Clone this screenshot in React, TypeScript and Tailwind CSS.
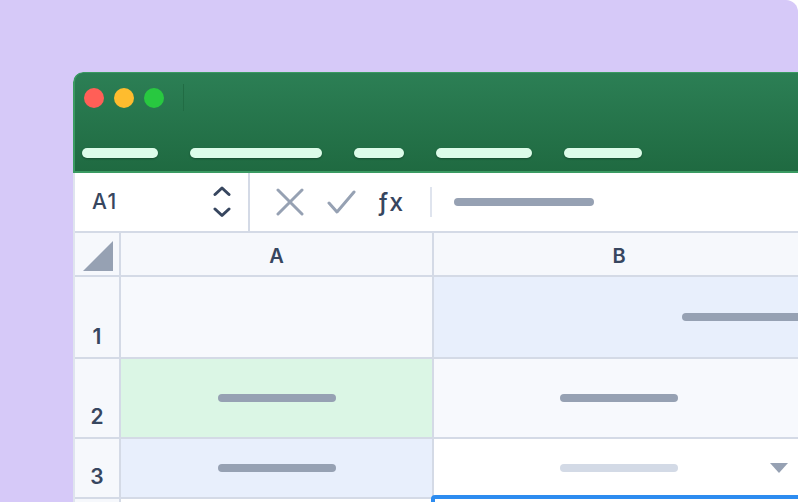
import React from 'react';

const menuWidths = [76, 132, 50, 96, 78];

function Bar({ w, light }: { w: number; light?: boolean }) {
  return (
    <div
      className={light ? 'h-[8px] rounded-full bg-[#d3dae6]' : 'h-[8px] rounded-full bg-[#96a1b3]'}
      style={{ width: w }}
    />
  );
}

function RowNum({ n }: { n: number }) {
  return (
    <div className="flex items-end justify-center bg-[#f6f8fc] pb-[8px] text-[21px] font-semibold leading-[24px] text-[#37465f]">
      {n}
    </div>
  );
}

export default function App() {
  return (
    <div className="w-[798px] h-[502px] overflow-hidden bg-white" style={{ fontFamily: 'Inter, "Noto Sans", sans-serif' }}>
      <div className="flex h-full rounded-tr-[12px] bg-[#d6c9f8] pt-[72px] pl-[73px]">
        <div className="flex flex-1 flex-col overflow-hidden rounded-tl-[10px]">
          {/* Title bar */}
          <div className="flex h-[101px] shrink-0 flex-col rounded-tl-[10px] border-t border-l-2 border-b-2 border-[#3a9a62] bg-linear-to-b from-[#2c7f55] to-[#1f6a41] pt-[11px] pl-[9px]">
            <div className="flex items-center gap-[10px]">
              <div className="h-[20px] w-[20px] rounded-full bg-[#ff5f57]" />
              <div className="h-[20px] w-[20px] rounded-full bg-[#febc2e]" />
              <div className="h-[20px] w-[20px] rounded-full bg-[#28c840]" />
              <div className="ml-[9px] h-[27px] w-px bg-[#216c44]" />
            </div>
            <div className="-ml-[2px] mt-[37px] flex gap-[32px]">
              {menuWidths.map((w, i) => (
                <div
                  key={i}
                  className="h-[10px] rounded-full bg-[#dcfce9] shadow-[0_1px_2px_rgba(0,0,0,0.3)]"
                  style={{ width: w }}
                />
              ))}
            </div>
          </div>

          {/* Body */}
          <div className="relative flex flex-1 flex-col border-l-2 border-[#dfe4ee] bg-white">
            {/* Formula bar */}
            <div className="flex h-[60px] shrink-0 items-center border-b-2 border-[#d4dae6]">
              <div className="flex h-full w-[173px] items-center pl-[17px] pr-[17px]">
                <span className="text-[21px] font-medium tracking-[1.5px] text-[#37465f]">A1</span>
                <svg className="ml-auto" width="18" height="32" viewBox="0 0 18 32" fill="none" stroke="#37465f" strokeWidth="3" strokeLinecap="round" strokeLinejoin="round">
                  <path d="M2 8.5 L9 2 L16 8.5" />
                  <path d="M2 23 L9 29.5 L16 23" />
                </svg>
              </div>
              <div className="h-full w-[2px] bg-[#d4dae6]" />
              <svg className="ml-[26px]" width="28" height="28" viewBox="0 0 28 28" fill="none" stroke="#96a1b3" strokeWidth="3" strokeLinecap="round">
                <path d="M2 2 L26 26 M26 2 L2 26" />
              </svg>
              <svg className="ml-[23px]" width="29" height="25" viewBox="0 0 29 25" fill="none" stroke="#96a1b3" strokeWidth="3" strokeLinecap="round" strokeLinejoin="round">
                <path d="M2 13 L10 22 L27 2" />
              </svg>
              <span className="ml-[22px] w-[30px] text-[25px] font-medium leading-none tracking-[1px] text-[#37465f]">ƒx</span>
              <div className="ml-[22px] h-[30px] w-[2px] bg-[#dfe4ee]" />
              <div className="ml-[22px]">
                <Bar w={140} />
              </div>
            </div>

            {/* Grid */}
            <div className="grid grid-cols-[44px_311px_370px] grid-rows-[42px_80px_78px_58px_40px] gap-[2px] bg-[#d4dae6]">
              <div className="bg-[#f6f8fc] pl-[8px] pt-[8px]">
                <svg width="30" height="30" viewBox="0 0 30 30">
                  <polygon points="0,30 30,0 30,30" fill="#96a1b3" />
                </svg>
              </div>
              <div className="flex items-center justify-center bg-[#f6f8fc] pt-[3px] text-[20px] font-semibold text-[#37465f]">A</div>
              <div className="flex items-center justify-center bg-[#f6f8fc] pt-[3px] text-[20px] font-semibold text-[#37465f]">B</div>

              <RowNum n={1} />
              <div className="bg-[#f7f9fd]" />
              <div className="flex items-center bg-[#e8effc] pl-[248px]">
                <Bar w={140} />
              </div>

              <RowNum n={2} />
              <div className="flex items-center justify-center bg-[#dbf6e5]">
                <Bar w={118} />
              </div>
              <div className="flex items-center justify-center bg-[#f7f9fd]">
                <Bar w={118} />
              </div>

              <RowNum n={3} />
              <div className="flex items-center justify-center bg-[#e8effc]">
                <Bar w={118} />
              </div>
              <div className="flex items-center bg-white pl-[126px] pr-[16px]">
                <Bar w={118} light />
                <svg className="ml-auto" width="18" height="10" viewBox="0 0 18 10">
                  <polygon points="0,0 18,0 9,10" fill="#96a1b3" />
                </svg>
              </div>

              <div className="bg-[#f6f8fc]" />
              <div className="bg-white" />
              <div className="bg-white" />
            </div>

            {/* Selected cell outline */}
            <div className="absolute left-[356px] top-[322px] h-[100px] w-[420px] rounded-[4px] border-4 border-[#2d8cf0]" />
          </div>
        </div>
      </div>
    </div>
  );
}
